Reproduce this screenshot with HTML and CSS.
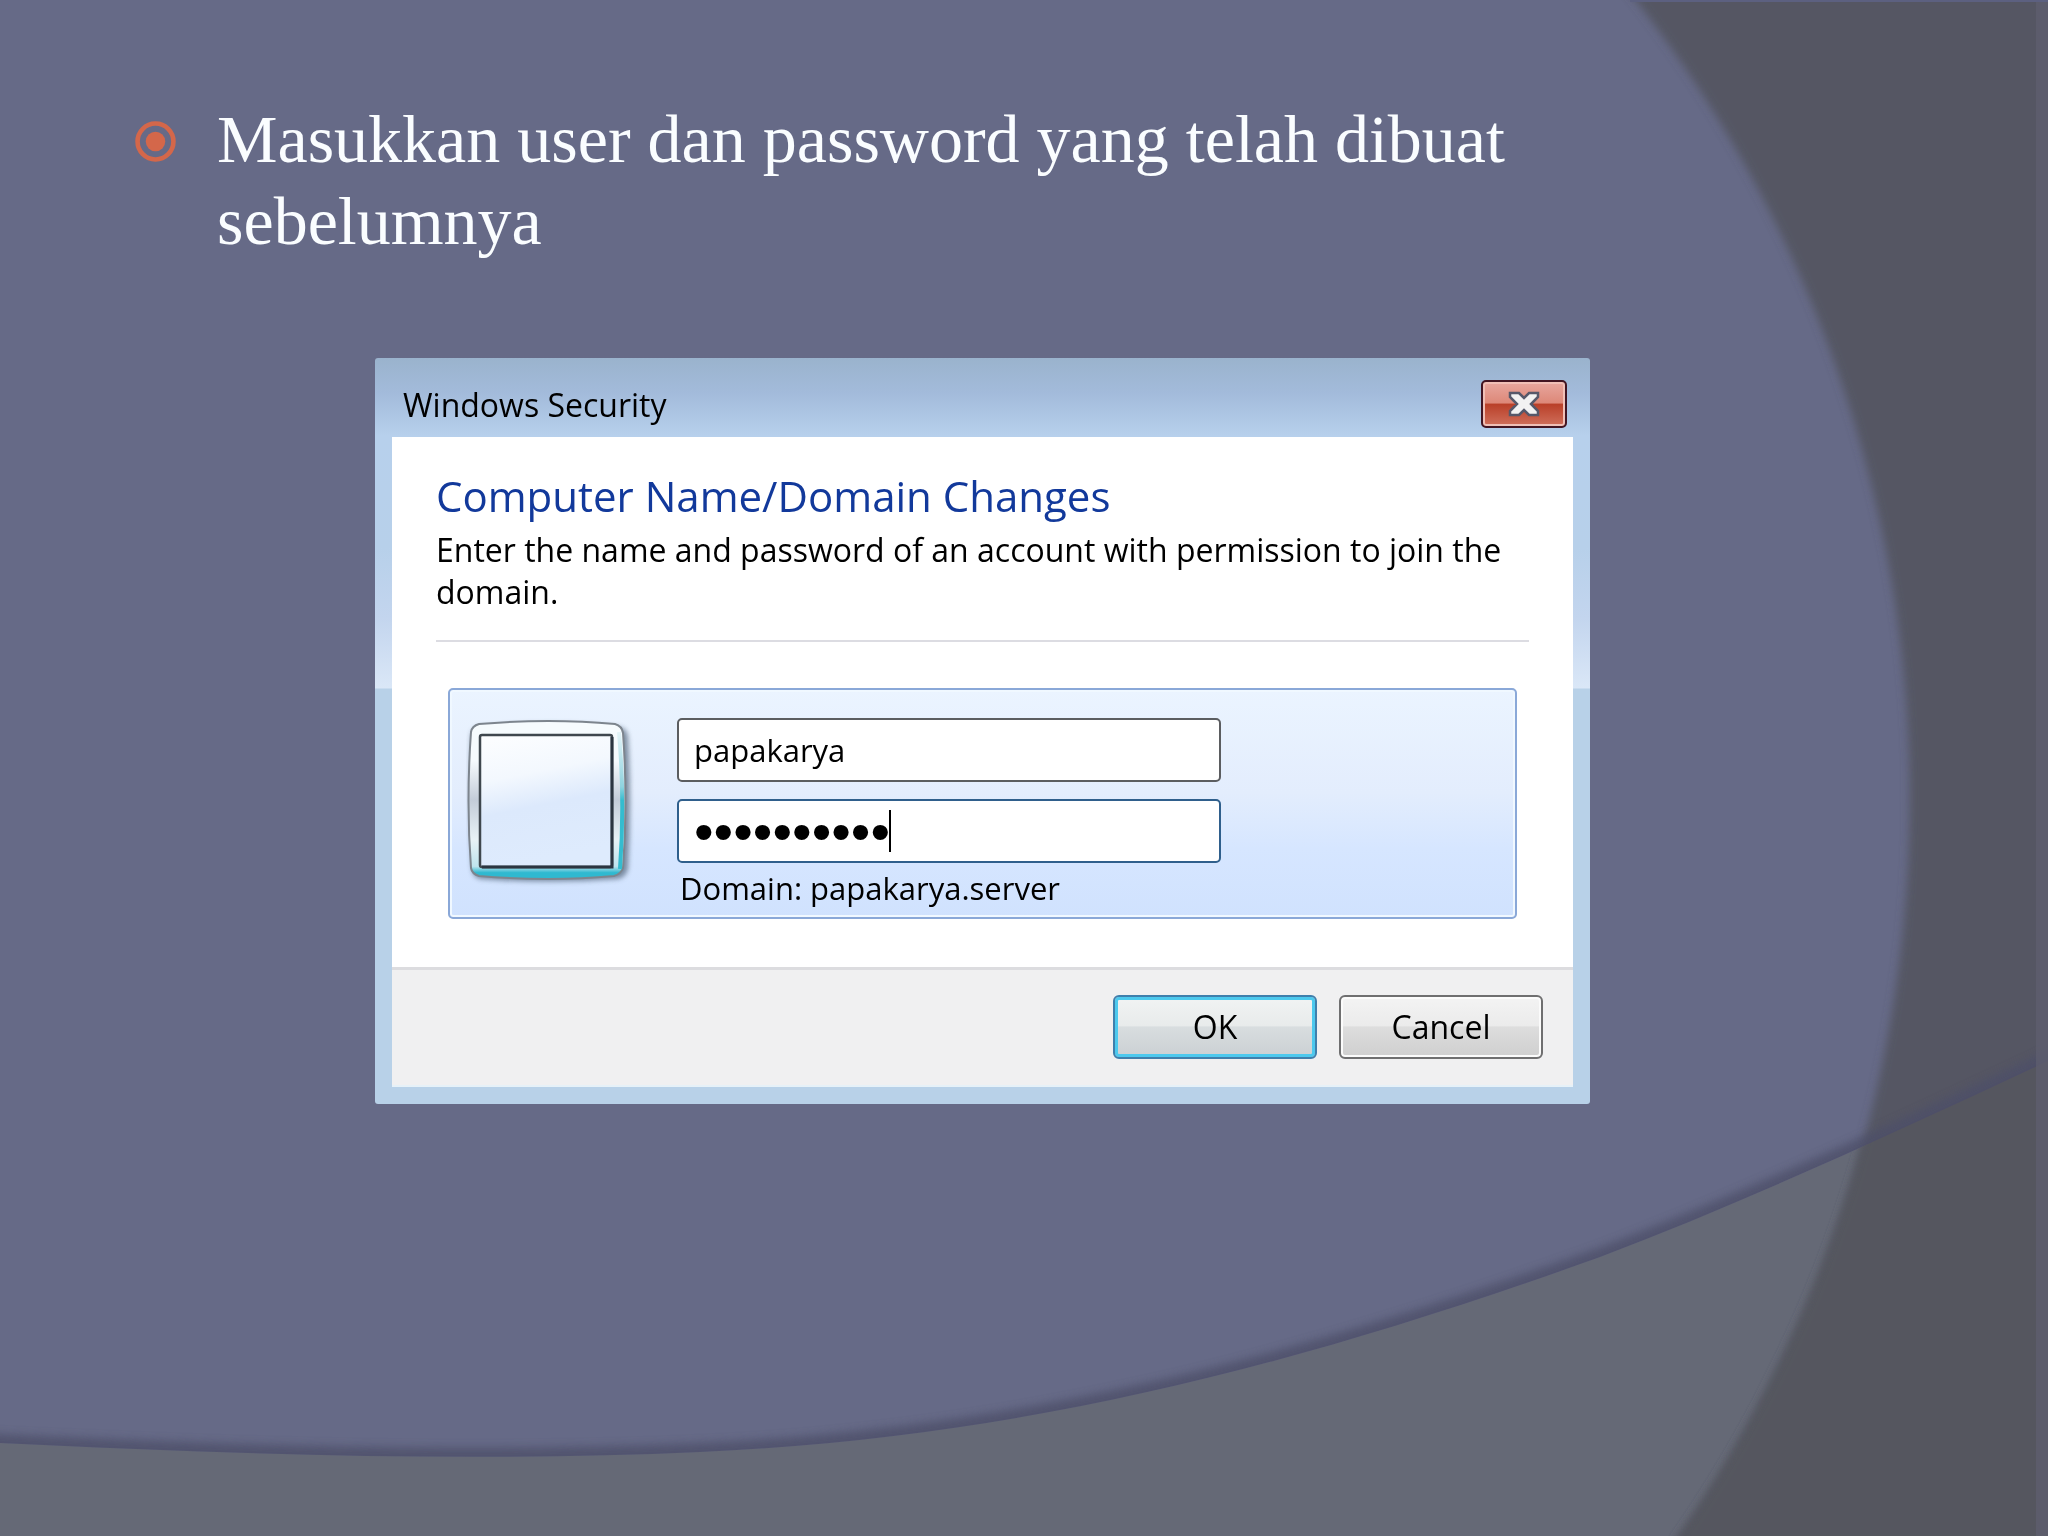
FILE: index.html
```
<!doctype html>
<html lang="id">
<head>
<meta charset="utf-8">
<title>Windows Security</title>
<link rel="stylesheet" href="styles.css">
</head>

<body>
	<svg class="backdrop" viewBox="0 0 2048 1536" preserveAspectRatio="none" aria-hidden="true">
		<defs>
			<filter id="soft" x="-5%" y="-5%" width="110%" height="110%"><feGaussianBlur stdDeviation="4"/></filter>
			<clipPath id="above"><path d="M0 0H2048V1061C1900 1130 1750 1200 1600 1257C1280 1372 1010 1438 700 1452C480 1462 250 1455 0 1443Z"/></clipPath>
			<clipPath id="below"><path d="M0 1536H2048V1061C1900 1130 1750 1200 1600 1257C1280 1372 1010 1438 700 1452C480 1462 250 1455 0 1443Z"/></clipPath>
		</defs>
		<path fill="#656976" d="M0 1443C250 1455 480 1462 700 1452C1010 1438 1280 1372 1600 1257C1750 1200 1900 1130 2048 1061V1536H0Z"/>
		<path fill="#545663" filter="url(#soft)" d="M1626 -12A1298 1298 0 0 1 1674 1544H2070V-12Z"/>
		<g clip-path="url(#below)">
			<path fill="#54565e" filter="url(#soft)" d="M1626 -12A1298 1298 0 0 1 1674 1544H2070V-12Z"/>
		</g>
		<g clip-path="url(#above)">
			<path class="shade" filter="url(#soft)" d="M-20 1442L0 1443C250 1455 480 1462 700 1452C1010 1438 1280 1372 1600 1257C1750 1200 1900 1130 2068 1051"/>
		</g>
		<path fill="#5f6070" d="M2036 0H2048V1536H2036Z" opacity=".7"/>
		<path fill="#5c6080" d="M1630 0H2048V2H1630Z"/>
	</svg>

	<main class="slide">
		<ul class="points">
			<li>
				<svg class="bullet" viewBox="0 0 40 40" aria-hidden="true">
					<circle cx="20" cy="20" r="17.5" fill="none" stroke="#d4674a" stroke-width="4.5"/>
					<circle cx="20" cy="20" r="9.5" fill="#d4674a"/>
				</svg>
				<p>Masukkan user dan password yang telah dibuat sebelumnya</p>
			</li>
		</ul>

		<form class="dialog">
			<header class="titlebar">
				<h1>Windows Security</h1>
				<button type="button" class="close" aria-label="Close">
					<svg viewBox="0 0 32 26" aria-hidden="true">
						<path d="M2 2H11L16 7L21 2H30V6L23 13L30 20V24H21L16 19L11 24H2V20L9 13L2 6Z" fill="#f2f2f2" stroke="#56586a" stroke-width="2.5"/>
					</svg>
				</button>
			</header>

			<div class="content">
				<h2>Computer Name/Domain Changes</h2>
				<p class="intro">Enter the name and password of an account with permission to join the domain.</p>
				<hr>
				<div class="account">
					<svg class="avatar" viewBox="0 0 172 172" aria-hidden="true">
						<defs>
							<linearGradient id="frame" x1="0" y1="0" x2="0" y2="1">
								<stop offset="0" stop-color="#f6fbfe"/>
								<stop offset=".25" stop-color="#f6fbfe"/>
								<stop offset=".5" stop-color="#c3ccd8"/>
								<stop offset=".75" stop-color="#e8f2f6"/>
								<stop offset=".92" stop-color="#c0e4ee"/>
								<stop offset=".96" stop-color="#2fb9d0"/>
							</linearGradient>
							<linearGradient id="edge" x1="0" y1="0" x2="0" y2="1">
								<stop offset="0" stop-color="#e4f4f8"/>
								<stop offset=".4" stop-color="#8fd3df"/>
								<stop offset=".5" stop-color="#35bccf"/>
								<stop offset="1" stop-color="#35bccf"/>
							</linearGradient>
							<linearGradient id="glass" x1="0" y1="0" x2=".2" y2="1">
								<stop offset="0" stop-color="#fdfeff"/>
								<stop offset=".35" stop-color="#f3f8fe"/>
								<stop offset=".6" stop-color="#dce9fc"/>
								<stop offset="1" stop-color="#deebfd"/>
							</linearGradient>
							<filter id="drop" x="-10%" y="-10%" width="125%" height="125%"><feGaussianBlur stdDeviation="2.5"/></filter>
						</defs>
						<path d="M12 9Q84 2 154 9Q161 11 162 19Q166 86 162 151Q160 159 152 161Q84 166 14 161Q7 159 6 151Q2 86 5 18Q6 11 12 9Z" fill="#53667c" opacity=".7" filter="url(#drop)"/>
						<path d="M13 6Q84 0 149 6Q156 8 157 15Q162 84 157 150Q155 156 148 158Q84 164 13 158Q6 156 5 150Q0 84 5 14Q6 8 13 6Z" fill="url(#frame)" stroke="#7d858e" stroke-width="2"/>
						<path d="M153 14Q159 84 154 151" fill="none" stroke="url(#edge)" stroke-width="4"/>
						<rect x="14" y="17" width="132" height="132" rx="2" fill="url(#glass)" stroke="#3f474e" stroke-width="2.5"/>
						<path d="M146 19V149H16" fill="none" stroke="#2b3540" stroke-width="3"/>
					</svg>
					<div class="fields">
						<input type="text" value="papakarya" aria-label="User name">
						<div class="secret">
							<input type="password" value="papakarya1" aria-label="Password">
							<span class="caret"></span>
						</div>
						<p>Domain: papakarya.server</p>
					</div>
				</div>
			</div>

			<footer class="actions">
				<button type="button" class="btn default">OK</button>
				<button type="button" class="btn">Cancel</button>
			</footer>
		</form>
	</main>
</body>

</html>
```

FILE: styles.css
```
*{
	box-sizing: border-box;
}
body{
	margin: 0;
	min-height: 100vh;
	background-color: #666a87;
	font-family: "Open Sans", "Noto Sans", sans-serif;
	font-size: 32px;
	line-height: 42px;
	color: #000;
}
h1, h2, p, ul{
	margin: 0;
	padding: 0;
	font-weight: normal;
}
.backdrop{
	position: fixed;
	top: 0;
	left: 0;
	z-index: -1;
	width: 100%;
	height: 100%;
}
.shade{
	fill: none;
	stroke: #4d5069;
	stroke-width: 18;
	opacity: .8;
}
.slide{
	padding: 98px 218px 0 135px;
}

/* bullet text */
.points{
	list-style: none;
	margin-bottom: 96px;
	font-family: "Liberation Serif", serif;
	font-size: 68px;
	line-height: 82px;
	color: #fafdff;
}
.points li{
	display: flex;
	gap: 41px;
}
.bullet{
	flex: none;
	width: 41px;
	height: 41px;
	margin-top: 23px;
}

/* dialog window */
.dialog{
	max-width: 1215px;
	margin: 0 auto;
	padding: 0 17px 17px;
	border-radius: 3px;
	background: linear-gradient(#9ab3cd 0, #a3bbdb 36px, #b7d0ec 78px, #b7d0ea 190px, #c3d5ee 260px, #dae7f7 330px, #b8d1e8 331px);
}
.titlebar{
	display: flex;
	justify-content: space-between;
	align-items: flex-start;
	height: 79px;
	padding: 22px 6px 0 11px;
}
h1{
	font-size: 32px;
	line-height: 50px;
}
.close{
	display: flex;
	align-items: center;
	justify-content: center;
	width: 86px;
	height: 48px;
	padding: 0;
	border: 2px solid #421522;
	border-radius: 5px;
	background: linear-gradient(#e8a79f, #dd8878 48%, #b93f28 50%, #d0705c);
	box-shadow: inset 0 0 0 2px #f0bfb6;
}
.close svg{
	width: 32px;
	height: 26px;
}
.content{
	padding: 33px 44px 48px;
	background: #fff;
}
h2{
	font-size: 42px;
	line-height: 52px;
	color: #12399b;
}
.intro{
	padding-top: 7px;
}
hr{
	height: 2px;
	margin: 27px 0 46px;
	border: 0;
	background: #dcdce2;
}
.account{
	display: flex;
	gap: 39px;
	margin: 0 12px;
	padding: 28px 16px 8px;
	border: 2px solid #8aa8d8;
	border-radius: 5px;
	background: linear-gradient(#ebf4ff, #e3edfd 45%, #d6e6ff 70%, #d0e2fe);
	box-shadow: inset 0 0 0 2px #f0f8ff;
	font-size: 31px;
}
.avatar{
	flex: none;
	width: 172px;
	height: 172px;
}
.fields{
	flex: 0 1 544px;
	min-width: 0;
}
.fields input{
	display: block;
	width: 100%;
	height: 64px;
	margin-bottom: 17px;
	padding: 0 15px;
	border: 2px solid #5b5d60;
	border-radius: 5px;
	background: #fff;
	font: inherit;
	color: #000;
}
.fields p{
	padding-left: 3px;
}
.secret{
	position: relative;
}
.secret input{
	margin-bottom: 4px;
	border-color: #2f5f8c;
	font-family: "Liberation Sans", sans-serif;
	font-size: 56px;
}
.caret{
	position: absolute;
	top: 11px;
	left: 212px;
	width: 2px;
	height: 42px;
	background: #000;
}
.actions{
	display: flex;
	justify-content: flex-end;
	gap: 22px;
	padding: 25px 30px 26px;
	border-top: 3px solid #dcdcdf;
	border-bottom: 2px solid #e6f1f8;
	background: #f0f0f1;
}
.btn{
	width: 204px;
	height: 64px;
	padding: 0;
	border: 2px solid #6f6f70;
	border-radius: 6px;
	background: linear-gradient(#f3f3f3, #ebebeb 48%, #dddddd 50%, #cfcfcf);
	box-shadow: inset 0 0 0 2px #fbfbfb;
	font: inherit;
	color: #000;
}
.default{
	border-color: #3f7fac;
	background: linear-gradient(#f1f3f3, #e8ebeb 48%, #d8dddf 50%, #cbd0d3);
	box-shadow: inset 0 0 0 3px #4cc9ee;
}
```
